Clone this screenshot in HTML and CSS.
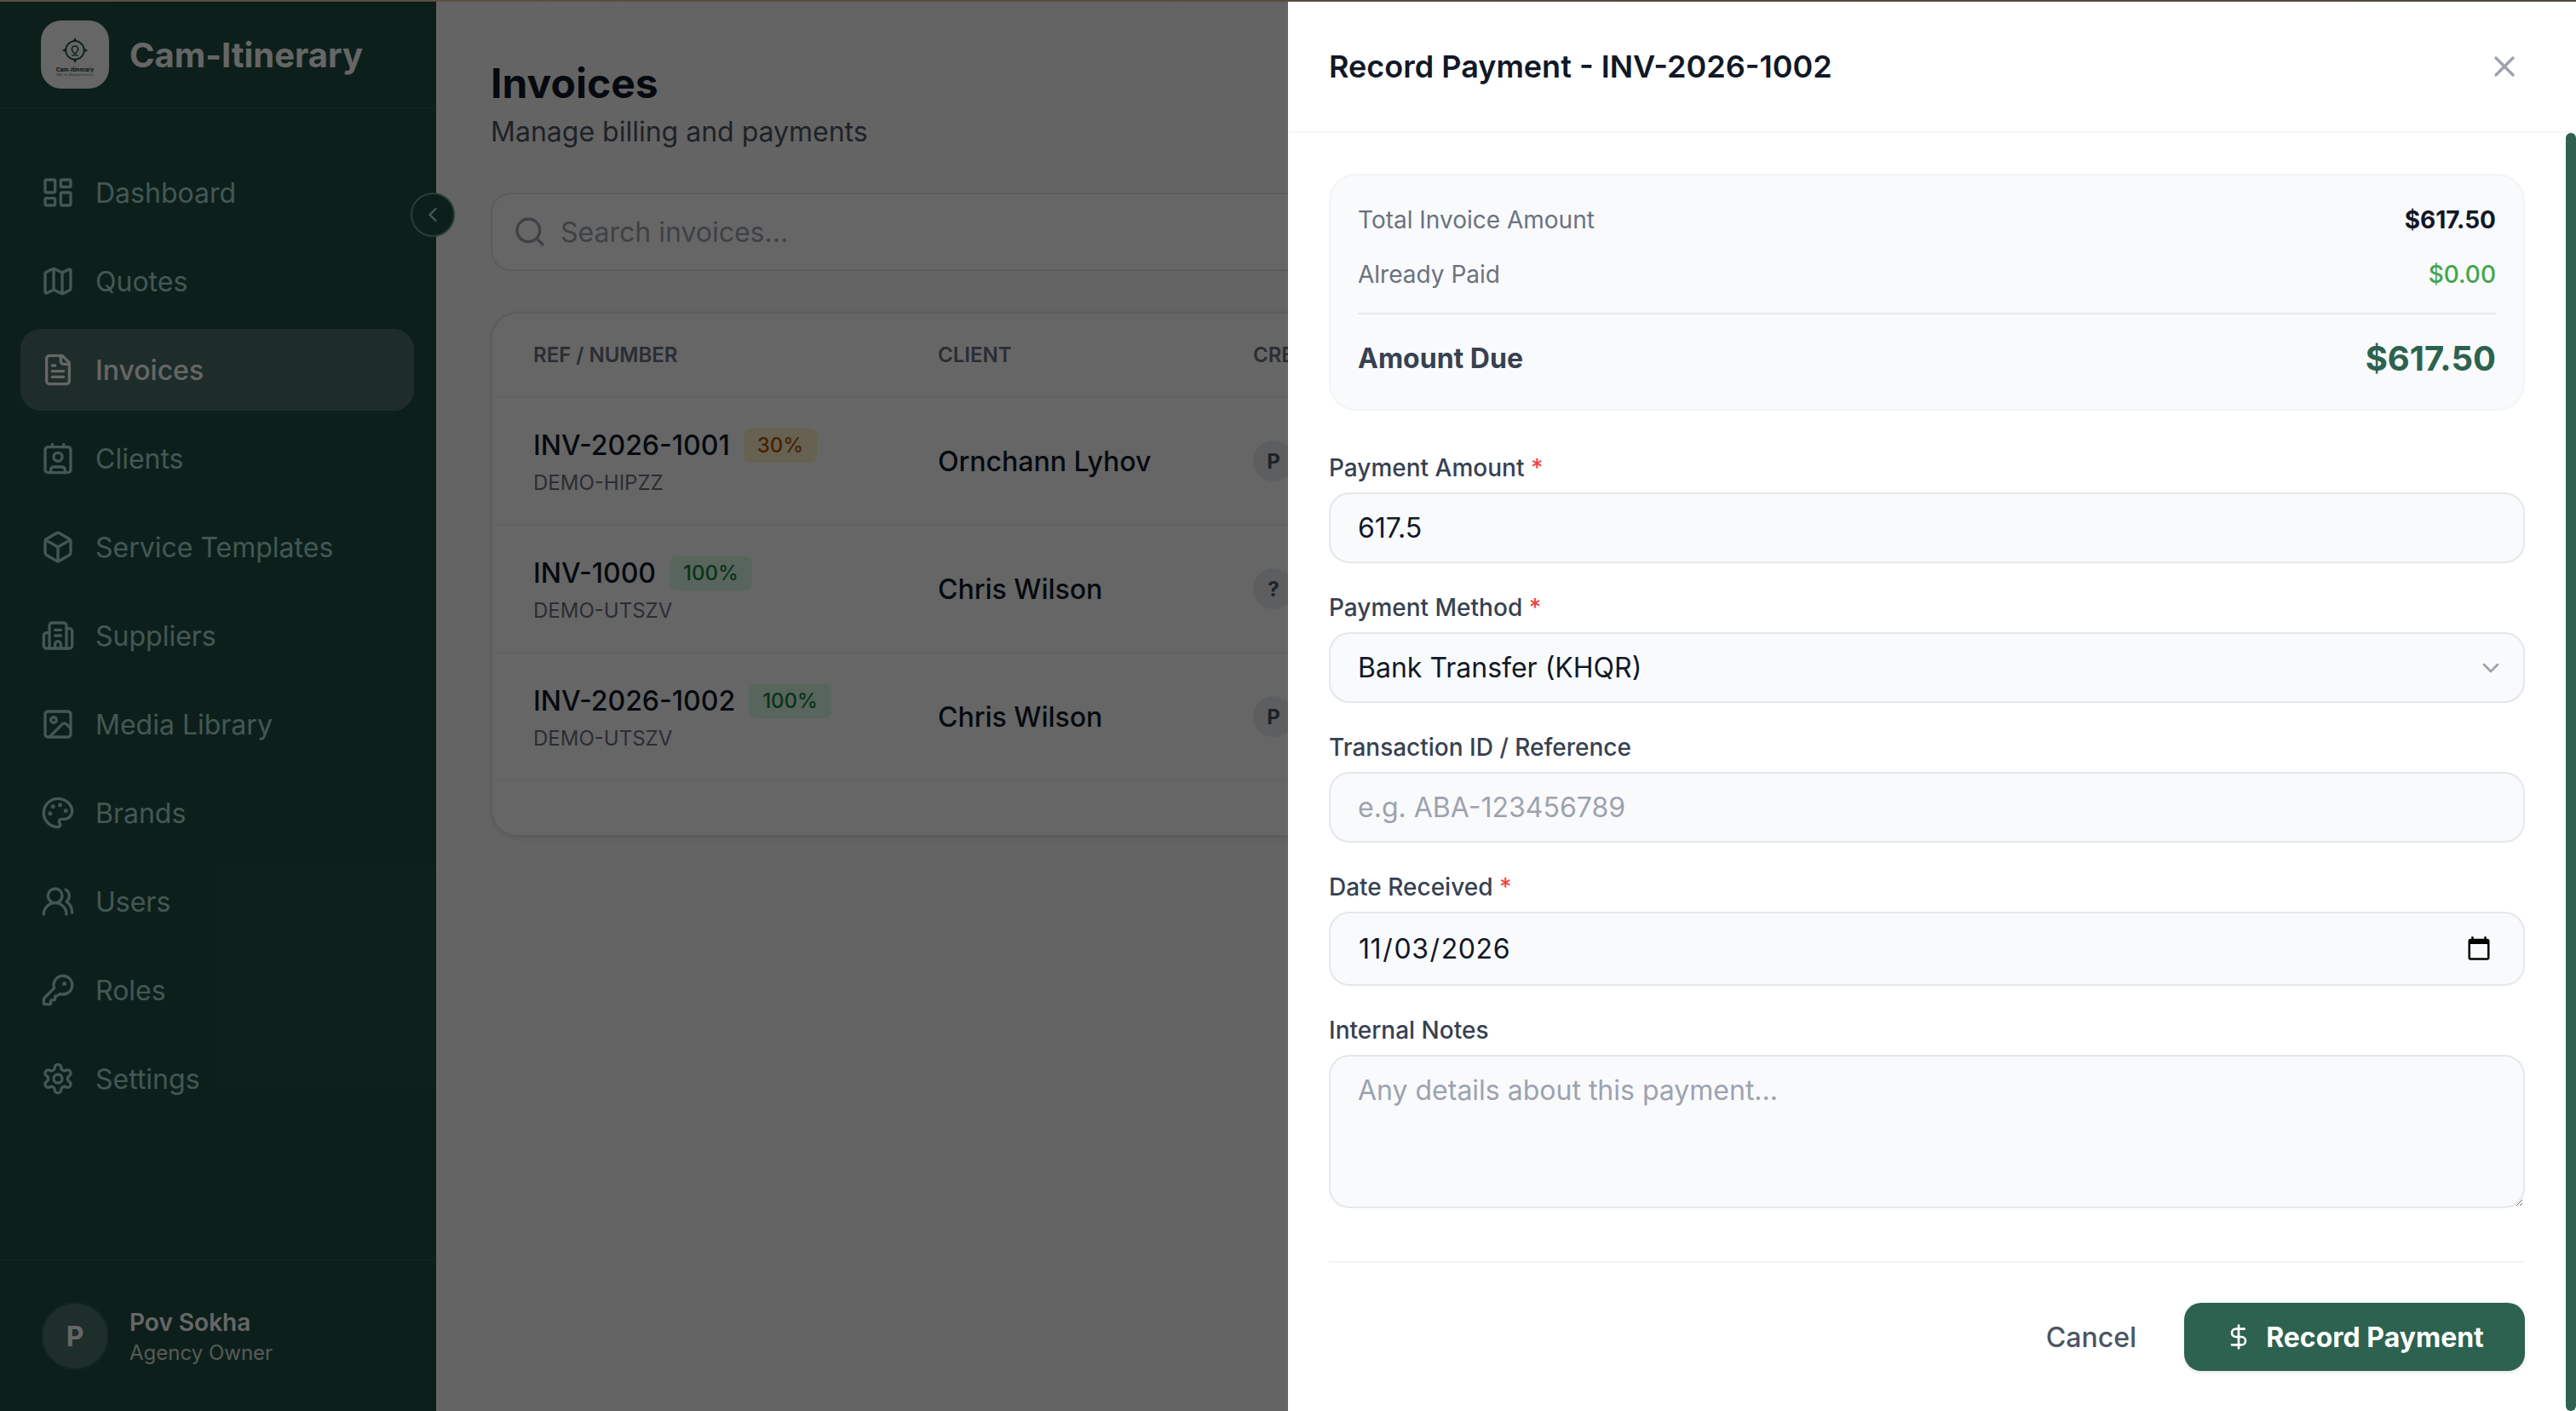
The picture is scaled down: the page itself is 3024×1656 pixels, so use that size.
FILE: index.html
```html
<!DOCTYPE html>
<html lang="en">
<head>
    <meta charset="UTF-8">
    <meta name="viewport" content="width=device-width, initial-scale=1.0">
    <title>Invoices</title>
    <link rel="stylesheet" href="styles.css">
</head>
<body>
<div class="top-strip"></div>
<div class="shell">
    <aside class="sidebar">
        <div class="brand">
            <div class="brand-logo">
                <svg class="brand-mark" viewBox="0 0 40 40" fill="none" stroke="currentColor">
                    <circle cx="20" cy="20" r="12" stroke-width="2"/>
                    <path d="M20 3l-2.500 5h5zM20 37l-2.500-5h5zM3 20l5-2.500v5zM37 20l-5-2.500v5z" fill="currentColor" stroke="none"/>
                    <path d="M20 14.500a4 4 0 0 0-4 4c0 2.500 4 6 4 6s4-3.500 4-6a4 4 0 0 0-4-4z" stroke-width="1.800"/>
                    <path d="M15.500 26.500h9" stroke-width="1.200"/>
                </svg>
                <span class="brand-logo-name">Cam-Itinerary</span>
                <span class="brand-logo-tag">DMC for Bespoke Itinerary</span>
            </div>
            <span class="brand-name">Cam-Itinerary</span>
        </div>
        <nav class="side-nav">
            <a class="side-link" href="#">
                <svg class="icon" viewBox="0 0 24 24"><rect x="3" y="3" width="7" height="9" rx="1"/><rect x="14" y="3" width="7" height="5" rx="1"/><rect x="14" y="12" width="7" height="9" rx="1"/><rect x="3" y="16" width="7" height="5" rx="1"/></svg>
                Dashboard
            </a>
            <a class="side-link" href="#">
                <svg class="icon" viewBox="0 0 24 24"><path d="M14.106 5.553a2 2 0 0 0 1.788 0l3.659-1.830A1 1 0 0 1 21 4.619v12.764a1 1 0 0 1-.553.894l-4.553 2.277a2 2 0 0 1-1.788 0l-4.212-2.106a2 2 0 0 0-1.788 0l-3.659 1.830A1 1 0 0 1 3 19.381V6.618a1 1 0 0 1 .553-.894l4.553-2.277a2 2 0 0 1 1.788 0z"/><path d="M15 5.764v15"/><path d="M9 3.236v15"/></svg>
                Quotes
            </a>
            <a class="side-link active" href="#">
                <svg class="icon" viewBox="0 0 24 24"><path d="M15 2H6a2 2 0 0 0-2 2v16a2 2 0 0 0 2 2h12a2 2 0 0 0 2-2V7Z"/><path d="M14 2v4a2 2 0 0 0 2 2h4"/><path d="M10 9H8"/><path d="M16 13H8"/><path d="M16 17H8"/></svg>
                Invoices
            </a>
            <a class="side-link" href="#">
                <svg class="icon" viewBox="0 0 24 24"><path d="M16 2v2"/><path d="M7 22v-2a2 2 0 0 1 2-2h6a2 2 0 0 1 2 2v2"/><path d="M8 2v2"/><circle cx="12" cy="11" r="3"/><rect x="3" y="4" width="18" height="18" rx="2"/></svg>
                Clients
            </a>
            <a class="side-link" href="#">
                <svg class="icon" viewBox="0 0 24 24"><path d="M21 8a2 2 0 0 0-1-1.730l-7-4a2 2 0 0 0-2 0l-7 4A2 2 0 0 0 3 8v8a2 2 0 0 0 1 1.730l7 4a2 2 0 0 0 2 0l7-4A2 2 0 0 0 21 16Z"/><path d="m3.300 7 8.700 5 8.700-5"/><path d="M12 22V12"/></svg>
                Service Templates
            </a>
            <a class="side-link" href="#">
                <svg class="icon" viewBox="0 0 24 24"><path d="M10 12h4"/><path d="M10 8h4"/><path d="M14 21v-3a2 2 0 0 0-4 0v3"/><path d="M6 10H4a2 2 0 0 0-2 2v7a2 2 0 0 0 2 2h16a2 2 0 0 0 2-2V9a2 2 0 0 0-2-2h-2"/><path d="M6 21V5a2 2 0 0 1 2-2h8a2 2 0 0 1 2 2v16"/></svg>
                Suppliers
            </a>
            <a class="side-link" href="#">
                <svg class="icon" viewBox="0 0 24 24"><rect x="3" y="3" width="18" height="18" rx="2"/><circle cx="9" cy="9" r="2"/><path d="m21 15-3.086-3.086a2 2 0 0 0-2.828 0L6 21"/></svg>
                Media Library
            </a>
            <a class="side-link" href="#">
                <svg class="icon" viewBox="0 0 24 24"><circle cx="13.500" cy="6.500" r=".5" fill="currentColor"/><circle cx="17.500" cy="10.500" r=".5" fill="currentColor"/><circle cx="8.500" cy="7.500" r=".5" fill="currentColor"/><circle cx="6.500" cy="12.500" r=".5" fill="currentColor"/><path d="M12 2C6.500 2 2 6.500 2 12s4.500 10 10 10c.926 0 1.648-.746 1.648-1.688 0-.437-.18-.835-.437-1.125-.29-.289-.438-.652-.438-1.125a1.640 1.640 0 0 1 1.668-1.668h1.996c3.051 0 5.555-2.503 5.555-5.554C21.965 6.012 17.461 2 12 2z"/></svg>
                Brands
            </a>
            <a class="side-link" href="#">
                <svg class="icon" viewBox="0 0 24 24"><path d="M18 21a8 8 0 0 0-16 0"/><circle cx="10" cy="8" r="5"/><path d="M22 20c0-3.370-2-6.500-4-8a5 5 0 0 0-.45-8.300"/></svg>
                Users
            </a>
            <a class="side-link" href="#">
                <svg class="icon" viewBox="0 0 24 24"><path d="M2.586 17.414A2 2 0 0 0 2 18.828V21a1 1 0 0 0 1 1h3a1 1 0 0 0 1-1v-1a1 1 0 0 1 1-1h1a1 1 0 0 0 1-1v-1a1 1 0 0 1 1-1h.172a2 2 0 0 0 1.414-.586l.814-.814a6.500 6.500 0 1 0-4-4z"/><circle cx="16.500" cy="7.500" r=".5" fill="currentColor"/></svg>
                Roles
            </a>
            <a class="side-link" href="#">
                <svg class="icon" viewBox="0 0 24 24"><path d="M12.220 2h-.44a2 2 0 0 0-2 2v.18a2 2 0 0 1-1 1.730l-.43.25a2 2 0 0 1-2 0l-.15-.08a2 2 0 0 0-2.730.73l-.22.38a2 2 0 0 0 .73 2.730l.15.1a2 2 0 0 1 1 1.720v.51a2 2 0 0 1-1 1.740l-.15.09a2 2 0 0 0-.73 2.730l.22.38a2 2 0 0 0 2.730.73l.15-.08a2 2 0 0 1 2 0l.43.25a2 2 0 0 1 1 1.730V20a2 2 0 0 0 2 2h.44a2 2 0 0 0 2-2v-.18a2 2 0 0 1 1-1.730l.43-.25a2 2 0 0 1 2 0l.15.08a2 2 0 0 0 2.730-.73l.22-.39a2 2 0 0 0-.73-2.730l-.15-.08a2 2 0 0 1-1-1.740v-.5a2 2 0 0 1 1-1.740l.15-.09a2 2 0 0 0 .73-2.730l-.22-.38a2 2 0 0 0-2.730-.73l-.15.08a2 2 0 0 1-2 0l-.43-.25a2 2 0 0 1-1-1.730V4a2 2 0 0 0-2-2z"/><circle cx="12" cy="12" r="3"/></svg>
                Settings
            </a>
        </nav>
        <div class="side-user">
            <div class="side-avatar">P</div>
            <div>
                <div class="side-user-name">Pov Sokha</div>
                <div class="side-user-role">Agency Owner</div>
            </div>
        </div>
        <button class="collapse-btn">
            <svg class="icon" viewBox="0 0 24 24"><path d="m15 18-6-6 6-6"/></svg>
        </button>
    </aside>

    <main class="main">
        <h1 class="page-title">Invoices</h1>
        <p class="page-sub">Manage billing and payments</p>
        <div class="search-box">
            <svg class="icon" viewBox="0 0 24 24"><path d="m21 21-4.300-4.300"/><circle cx="11" cy="11" r="8"/></svg>
            <span>Search invoices...</span>
        </div>
        <div class="table-card">
            <div class="table-row table-head">
                <div>Ref / Number</div>
                <div>Client</div>
                <div>Created</div>
            </div>
            <div class="table-row">
                <div class="inv-cell">
                    <div class="inv-line"><span class="inv-number">INV-2026-1001</span><span class="badge badge-part">30%</span></div>
                    <div class="inv-ref">DEMO-HIPZZ</div>
                </div>
                <div class="client-name">Ornchann Lyhov</div>
                <div><span class="mini-avatar">P</span></div>
            </div>
            <div class="table-row">
                <div class="inv-cell">
                    <div class="inv-line"><span class="inv-number">INV-1000</span><span class="badge badge-full">100%</span></div>
                    <div class="inv-ref">DEMO-UTSZV</div>
                </div>
                <div class="client-name">Chris Wilson</div>
                <div><span class="mini-avatar">?</span></div>
            </div>
            <div class="table-row">
                <div class="inv-cell">
                    <div class="inv-line"><span class="inv-number">INV-2026-1002</span><span class="badge badge-full">100%</span></div>
                    <div class="inv-ref">DEMO-UTSZV</div>
                </div>
                <div class="client-name">Chris Wilson</div>
                <div><span class="mini-avatar">P</span></div>
            </div>
        </div>
    </main>

    <div class="overlay"></div>

    <section class="panel">
        <header class="panel-head">
            <h2>Record Payment - INV-2026-1002</h2>
            <button class="panel-close">
                <svg class="icon" viewBox="0 0 24 24"><path d="M18 6 6 18"/><path d="m6 6 12 12"/></svg>
            </button>
        </header>
        <div class="panel-body">
            <div class="summary">
                <div class="summary-row"><span>Total Invoice Amount</span><span class="summary-total">$617.50</span></div>
                <div class="summary-row"><span>Already Paid</span><span class="summary-paid">$0.00</span></div>
                <div class="summary-due"><span>Amount Due</span><span class="summary-due-value">$617.50</span></div>
            </div>

            <label class="field">
                <span class="field-label">Payment Amount <em>*</em></span>
                <input class="control" type="text" value="617.5">
            </label>
            <label class="field">
                <span class="field-label">Payment Method <em>*</em></span>
                <span class="select-wrap">
                    <select class="control">
                        <option>Bank Transfer (KHQR)</option>
                    </select>
                    <svg class="icon select-chevron" viewBox="0 0 24 24"><path d="m6 9 6 6 6-6"/></svg>
                </span>
            </label>
            <label class="field">
                <span class="field-label">Transaction ID / Reference</span>
                <input class="control" type="text" placeholder="e.g. ABA-123456789">
            </label>
            <label class="field">
                <span class="field-label">Date Received <em>*</em></span>
                <input class="control control-date" type="date" value="2026-11-03">
            </label>
            <label class="field">
                <span class="field-label">Internal Notes</span>
                <textarea class="control control-notes" placeholder="Any details about this payment..."></textarea>
            </label>

            <div class="panel-actions">
                <button class="btn-cancel">Cancel</button>
                <button class="btn-record">
                    <svg class="icon" viewBox="0 0 24 24"><line x1="12" x2="12" y1="2" y2="22"/><path d="M17 5H9.500a3.500 3.500 0 0 0 0 7h5a3.500 3.500 0 0 1 0 7H6"/></svg>
                    Record Payment
                </button>
            </div>
        </div>
        <div class="panel-scrollbar"></div>
    </section>
</div>
</body>
</html>
```

FILE: styles.css
```css
/* Base */
* { box-sizing: border-box; }
html, body { height: 100%; }
body {
    margin: 0;
    font-family: Inter, "Noto Sans", sans-serif;
    background-color: #f9fafb;
    color: #111827;
    overflow: hidden;
}

.icon {
    width: 40px;
    height: 40px;
    flex-shrink: 0;
    fill: none;
    stroke: currentColor;
    stroke-width: 2;
    stroke-linecap: round;
    stroke-linejoin: round;
}

.top-strip {
    height: 2px;
    background: linear-gradient(90deg, #5d5040, #4e4a3a);
}

.shell {
    position: relative;
    display: flex;
    height: 1654px;
    overflow: hidden;
}

/* Sidebar */
.sidebar {
    position: relative;
    width: 512px;
    flex-shrink: 0;
    display: flex;
    flex-direction: column;
    background-color: #214f44;
}

.brand {
    height: 126px;
    flex-shrink: 0;
    display: flex;
    align-items: center;
    gap: 24px;
    padding-left: 48px;
    border-bottom: 2px solid #2a5a4e;
}

.brand-logo {
    width: 80px;
    height: 80px;
    border-radius: 24px;
    background-color: #fff;
    color: #214f44;
    display: flex;
    flex-direction: column;
    align-items: center;
    overflow: hidden;
}

.brand-mark {
    width: 36px;
    height: 36px;
    margin-top: 17px;
    flex-shrink: 0;
}

.brand-logo-name {
    font-size: 6.500px;
    font-weight: 700;
    line-height: 8px;
    margin-top: 1px;
    white-space: nowrap;
    color: #17332c;
}

.brand-logo-tag {
    font-size: 3.500px;
    line-height: 5px;
    white-space: nowrap;
    color: #55706a;
}

.brand-name {
    font-size: 40px;
    font-weight: 700;
    color: #fff;
}

.side-nav {
    flex: 1;
    display: flex;
    flex-direction: column;
    gap: 8px;
    padding: 50px 26px 0 24px;
}

.side-link {
    height: 96px;
    flex-shrink: 0;
    display: flex;
    align-items: center;
    gap: 24px;
    padding-left: 24px;
    border-radius: 24px;
    font-size: 32px;
    font-weight: 400;
    color: #a5dccf;
    text-decoration: none;
}

.side-link.active {
    background-color: rgba(255, 255, 255, 0.2);
    color: #fff;
    font-weight: 500;
}

.side-user {
    height: 178px;
    flex-shrink: 0;
    display: flex;
    align-items: center;
    gap: 24px;
    padding: 48px;
    border-top: 2px solid #2a5a4e;
}

.side-avatar {
    width: 80px;
    height: 80px;
    border-radius: 50%;
    border: 2px solid #2f5c51;
    background-color: #4d7369;
    color: #fff;
    font-size: 32px;
    font-weight: 700;
    display: flex;
    align-items: center;
    justify-content: center;
}

.side-user-name {
    font-size: 28px;
    font-weight: 600;
    line-height: 40px;
    color: #fff;
}

.side-user-role {
    font-size: 24px;
    line-height: 32px;
    color: #d8e0dd;
}

.collapse-btn {
    position: absolute;
    top: 224px;
    right: -22px;
    width: 52px;
    height: 52px;
    padding: 0;
    border-radius: 50%;
    border: 2px solid #5d9c8a;
    background-color: #214f44;
    color: #a5dccf;
    display: flex;
    align-items: center;
    justify-content: center;
}

.collapse-btn .icon {
    width: 28px;
    height: 28px;
}

/* Page content */
.main {
    flex: 1;
    padding: 64px 64px 0;
}

.page-title {
    margin: 0;
    font-size: 48px;
    font-weight: 700;
    line-height: 64px;
    color: #111827;
}

.page-sub {
    margin: 1px 0 0;
    font-size: 32px;
    line-height: 48px;
    color: #4b5563;
}

.search-box {
    height: 92px;
    margin-top: 47px;
    display: flex;
    align-items: center;
    gap: 16px;
    padding-left: 24px;
    border: 2px solid #e5e7eb;
    border-radius: 24px;
    background-color: #fff;
    font-size: 32px;
    color: #9ca3af;
}

.table-card {
    height: 616px;
    margin-top: 48px;
    border: 2px solid #e5e7eb;
    border-radius: 32px;
    background-color: #fff;
    box-shadow: 0 2px 6px rgba(0, 0, 0, 0.1);
}

.table-row {
    height: 150px;
    display: grid;
    grid-template-columns: 475px 370px 1fr;
    align-items: center;
    padding-left: 48px;
    border-bottom: 2px solid #f3f4f6;
}

.table-row.table-head {
    height: 99px;
    font-size: 24px;
    font-weight: 600;
    text-transform: uppercase;
    color: #6b7280;
}

.inv-cell { padding-top: 4px; }

.inv-line {
    display: flex;
    align-items: center;
    gap: 16px;
}

.inv-number {
    font-size: 32px;
    font-weight: 500;
    line-height: 40px;
}

.badge {
    height: 40px;
    padding: 0 16px;
    border-radius: 8px;
    font-size: 24px;
    font-weight: 500;
    line-height: 40px;
}

.badge-part { background-color: #fef3c7; color: #b45309; }
.badge-full { background-color: #dcfce7; color: #15803d; }

.inv-ref {
    font-size: 24px;
    line-height: 32px;
    margin-top: 8px;
    color: #6b7280;
}

.client-name {
    font-size: 32px;
    font-weight: 500;
}

.mini-avatar {
    width: 48px;
    height: 48px;
    border-radius: 50%;
    background-color: #e9ebee;
    color: #4b5563;
    font-size: 24px;
    font-weight: 700;
    display: flex;
    align-items: center;
    justify-content: center;
}

/* Overlay and payment panel */
.overlay {
    position: absolute;
    inset: 0;
    background-color: rgba(0, 0, 0, 0.6);
}

.panel {
    position: absolute;
    top: 0;
    right: 0;
    bottom: 0;
    width: 1512px;
    display: flex;
    flex-direction: column;
    background-color: #fff;
}

.panel-head {
    height: 154px;
    flex-shrink: 0;
    display: flex;
    align-items: center;
    justify-content: space-between;
    padding: 0 64px 0 48px;
    border-bottom: 2px solid #f3f4f6;
}

.panel-head h2 {
    margin: 0;
    font-size: 36px;
    font-weight: 600;
    color: #111827;
}

.panel-close {
    padding: 0;
    border: none;
    background: none;
    color: #9ca3af;
    display: flex;
}

.panel-body {
    flex: 1;
    overflow: hidden;
    padding: 48px 60px 47px 48px;
}

.panel-scrollbar {
    position: absolute;
    top: 154px;
    right: 0;
    bottom: 0;
    width: 12px;
    border-radius: 6px;
    background-color: #2d6250;
}

.summary {
    height: 278px;
    padding: 20px 32px 0;
    margin-bottom: 46px;
    border: 2px solid #f3f4f6;
    border-radius: 32px;
    background-color: #f9fafb;
}

.summary-row {
    display: flex;
    justify-content: space-between;
    align-items: center;
    height: 64px;
    font-size: 28px;
    color: #6b7280;
}

.summary-total { font-weight: 700; color: #111827; }
.summary-paid { font-weight: 500; color: #43a650; }

.summary-due {
    display: flex;
    justify-content: space-between;
    align-items: center;
    height: 90px;
    margin-top: 13px;
    padding-top: 14px;
    border-top: 2px solid #e5e7eb;
    font-size: 32px;
    font-weight: 700;
    color: #374151;
}

.summary-due-value {
    font-size: 40px;
    color: #2d6250;
}

.field {
    display: block;
    margin-bottom: 31px;
}

.field-label {
    display: block;
    font-size: 28px;
    font-weight: 500;
    line-height: 42px;
    margin-bottom: 8px;
    color: #374151;
}

.field-label em {
    font-style: normal;
    color: #ef4444;
}

.control {
    display: block;
    width: 100%;
    height: 83px;
    padding: 0 32px;
    border: 2px solid #e5e7eb;
    border-radius: 24px;
    background-color: #f9fafb;
    font-family: inherit;
    font-size: 32px;
    color: #111827;
    outline: none;
}

.control::placeholder { color: #9ca3af; }

.select-wrap {
    position: relative;
    display: block;
}

select.control { appearance: none; }

.select-chevron {
    position: absolute;
    top: 26px;
    right: 24px;
    width: 32px;
    height: 32px;
    color: #9ca3af;
    pointer-events: none;
}

.control-date {
    height: 87px;
    padding-right: 34px;
    letter-spacing: 0.6px;
}

.control-notes {
    height: 180px;
    padding-top: 20px;
    resize: vertical;
}

.panel-actions {
    display: flex;
    justify-content: flex-end;
    align-items: center;
    gap: 24px;
    margin-top: 62px;
    padding-top: 47px;
    border-top: 2px solid #f3f4f6;
}

.btn-cancel {
    padding: 0 32px;
    border: none;
    background: none;
    font-family: inherit;
    font-size: 32px;
    font-weight: 500;
    color: #4b5563;
}

.btn-record {
    width: 400px;
    height: 80px;
    display: flex;
    align-items: center;
    justify-content: center;
    gap: 16px;
    border: none;
    border-radius: 20px;
    background-color: #2d6250;
    box-shadow: 0 2px 4px rgba(0, 0, 0, 0.1);
    font-family: inherit;
    font-size: 32px;
    font-weight: 700;
    color: #fff;
}

.btn-record .icon {
    width: 32px;
    height: 32px;
}
```
